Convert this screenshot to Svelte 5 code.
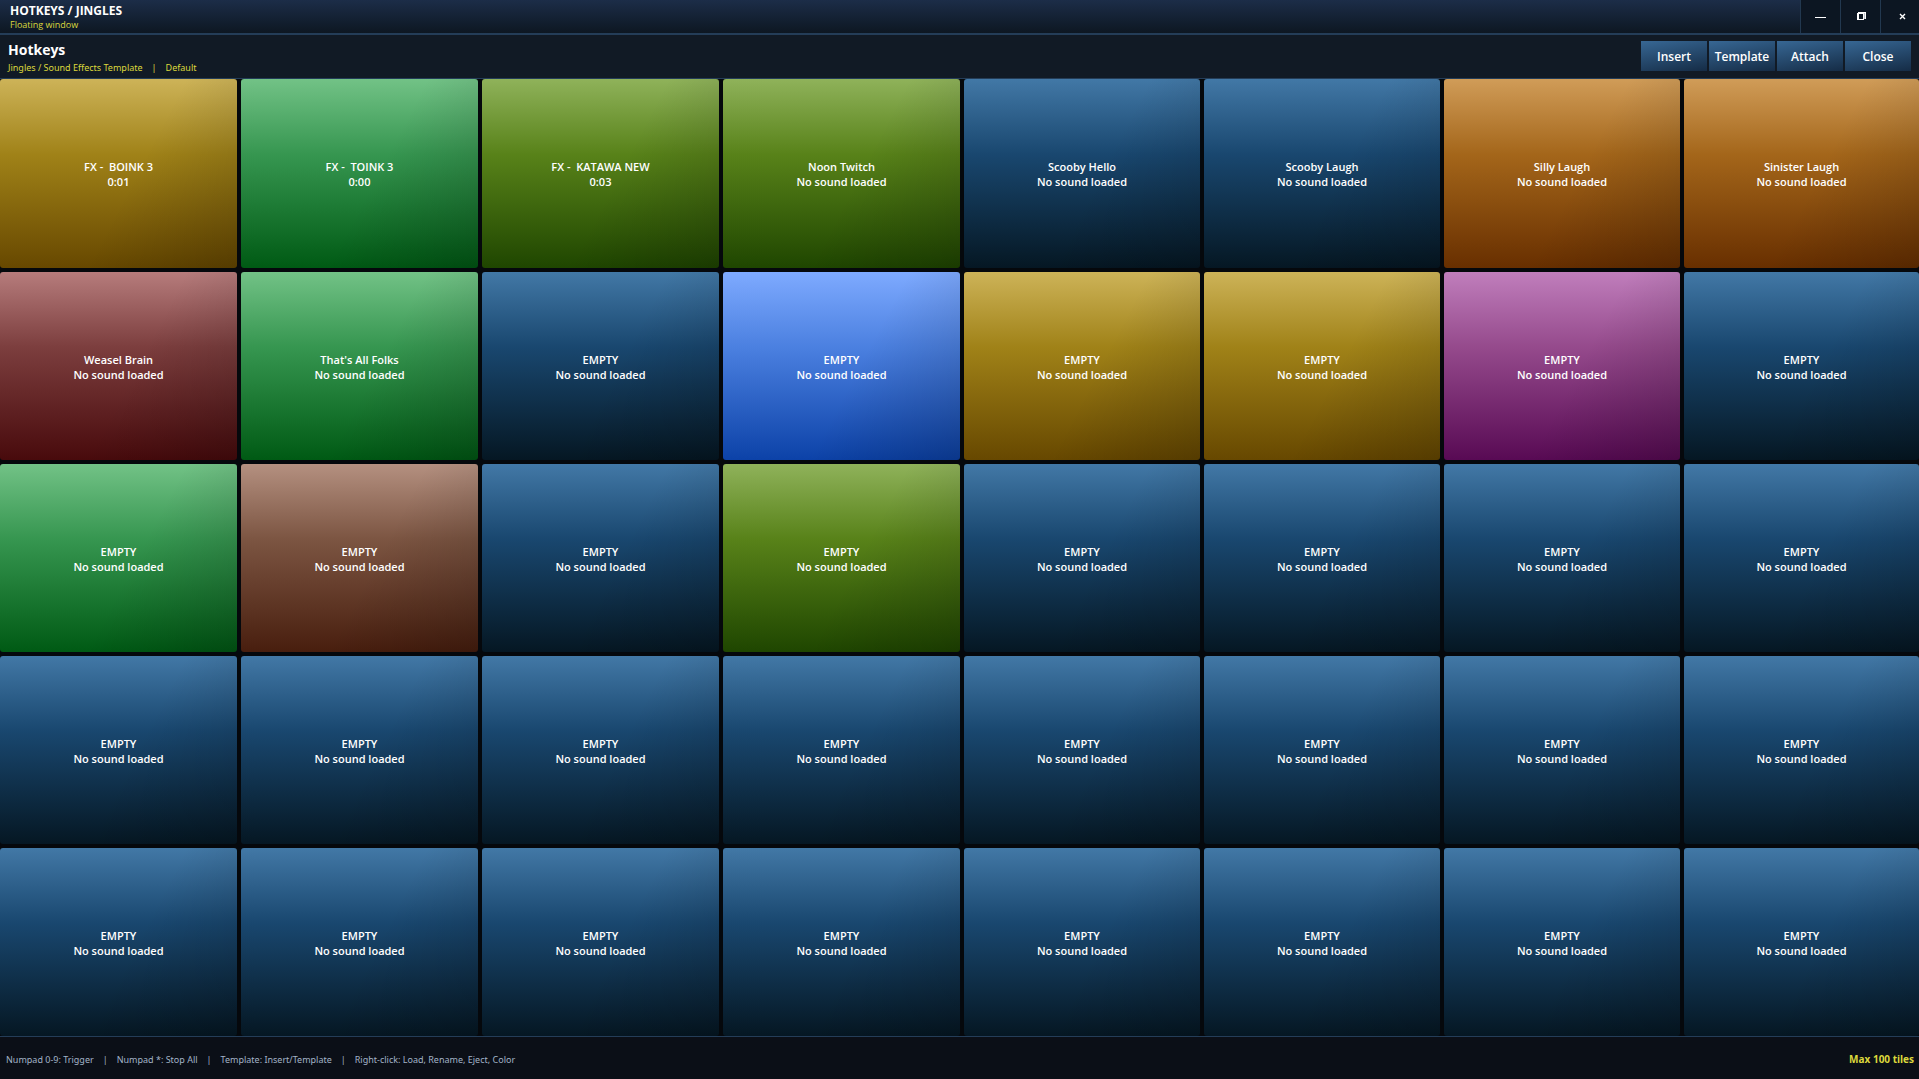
<script>
	const palette = {
		blue: ['#4278a6', '#19476f', '#051723'],
		gold: ['#cdb358', '#a08218', '#674800'],
		green: ['#72c286', '#369650', '#005a14'],
		olive: ['#8fb25a', '#588219', '#1f4600'],
		orange: ['#d09c58', '#a4661a', '#682f00'],
		maroon: ['#b67c7c', '#7c3e3e', '#480a0c'],
		royal: ['#7eaaff', '#4b80e0', '#0c42a8'],
		purple: ['#c07ebc', '#954a8c', '#580a54'],
		brown: ['#b49080', '#7c5542', '#481e0e']
	};

	const named = [
		['FX -  BOINK 3', '0:01', 'gold'],
		['FX -  TOINK 3', '0:00', 'green'],
		['FX -  KATAWA NEW', '0:03', 'olive'],
		['Noon Twitch', '', 'olive'],
		['Scooby Hello', '', 'blue'],
		['Scooby Laugh', '', 'blue'],
		['Silly Laugh', '', 'orange'],
		['Sinister Laugh', '', 'orange'],
		['Weasel Brain', '', 'maroon'],
		["That's All Folks", '', 'green']
	];

	// colours of the empty tiles that were customised, by position
	const colors = {
		11: 'royal',
		12: 'gold',
		13: 'gold',
		14: 'purple',
		16: 'green',
		17: 'brown',
		19: 'olive'
	};

	const tiles = Array.from({ length: 40 }, (_, i) => {
		const [name, time, color] = named[i] ?? ['EMPTY', '', colors[i] ?? 'blue'];
		const [top, mid, low] = palette[color];
		return { name, time: time || 'No sound loaded', top, mid, low };
	});

	const actions = ['Insert', 'Template', 'Attach', 'Close'];
	const hints = [
		'Numpad 0-9: Trigger',
		'Numpad *: Stop All',
		'Template: Insert/Template',
		'Right-click: Load, Rename, Eject, Color'
	];
</script>

<div class="window">
	<div class="titlebar">
		<div class="caption">
			<strong>HOTKEYS / JINGLES</strong>
			<small>Floating window</small>
		</div>
		<div class="controls">
			<button aria-label="Minimize">
				<svg width="13" height="12" viewBox="0 0 13 12"><path d="M1 6.5h11" stroke="#fff" /></svg>
			</button>
			<button aria-label="Restore">
				<svg width="13" height="12" viewBox="0 0 13 12">
					<path
						d="M4 1h8v7h-2v1H3V2h1zM5 3v5h4V3z"
						fill="#fff"
						fill-rule="evenodd"
					/>
					<path d="M10.5 2v6" stroke="#8d99a6" stroke-width="0.6" />
				</svg>
			</button>
			<button aria-label="Close window">
				<svg width="13" height="12" viewBox="0 0 13 12">
					<path d="M6 3l5 5M11 3l-5 5" stroke="#fff" stroke-width="1.4" />
				</svg>
			</button>
		</div>
	</div>

	<header>
		<div>
			<h1>Hotkeys</h1>
			<p><span>Jingles / Sound Effects Template</span><i>|</i><span>Default</span></p>
		</div>
		<nav>
			{#each actions as action}
				<button>{action}</button>
			{/each}
		</nav>
	</header>

	<main>
		{#each tiles as tile}
			<button class="tile" style="--top: {tile.top}; --mid: {tile.mid}; --low: {tile.low}">
				<span>{tile.name}</span>
				<span>{tile.time}</span>
			</button>
		{/each}
	</main>

	<footer>
		<p>
			{#each hints as hint, i}
				{#if i > 0}<i>|</i>{/if}<span>{hint}</span>
			{/each}
		</p>
		<strong>Max 100 tiles</strong>
	</footer>
</div>

<style>
	:global(body) {
		margin: 0;
		background: #05080c;
	}

	.window {
		display: flex;
		flex-direction: column;
		min-height: 100vh;
		font-family: 'Open Sans', 'Noto Sans', sans-serif;
		color: #fff;
		background: #05080c;
	}

	button {
		padding: 0;
		border: 0;
		font-family: inherit;
		color: inherit;
	}

	p,
	h1 {
		margin: 0;
	}

	i {
		font-style: normal;
	}

	.titlebar {
		display: flex;
		justify-content: space-between;
		height: 33px;
		border-bottom: 2px solid #243d58;
		background: linear-gradient(#1c2d48, #0d1722);
	}

	.caption {
		display: flex;
		flex-direction: column;
		padding: 2px 10px;
	}

	.caption strong {
		font-size: 12px;
		line-height: 17px;
	}

	.caption small {
		font-size: 9px;
		line-height: 12px;
		color: #dcd83c;
	}

	.controls {
		display: flex;
	}

	.controls button {
		display: flex;
		align-items: center;
		justify-content: center;
		width: 40px;
		border-left: 1px solid #22384f;
		background: #0c1622;
	}

	.controls button:last-child {
		width: 39px;
	}

	header {
		display: flex;
		justify-content: space-between;
		align-items: flex-start;
		height: 37px;
		padding: 6px 8px 0;
		border-bottom: 1px solid #243d58;
		background: #111a25;
	}

	h1 {
		font-size: 14px;
		line-height: 18px;
	}

	header p {
		display: flex;
		gap: 9px;
		font-family: 'Noto Sans', sans-serif;
		font-size: 9px;
		line-height: 18px;
		color: #dcd83c;
	}

	nav {
		display: flex;
		gap: 2px;
	}

	nav button {
		width: 66px;
		height: 30px;
		font-size: 12px;
		font-weight: 600;
		background: linear-gradient(170deg, #376794, #152c46);
	}

	main {
		flex: 1;
		display: grid;
		grid-template-columns: repeat(4, 237fr) repeat(3, 236fr) 235fr;
		grid-template-rows: 189fr repeat(4, 188fr);
		gap: 4px;
	}

	.tile {
		display: flex;
		flex-direction: column;
		align-items: center;
		justify-content: center;
		padding-top: 1px;
		border-radius: 3px;
		font-size: 11px;
		font-weight: 600;
		line-height: 15px;
		white-space: pre;
		background:
			linear-gradient(118deg, transparent 55%, rgba(0, 0, 0, 0.18)),
			linear-gradient(var(--top), var(--mid) 40%, var(--low));
	}

	footer {
		display: flex;
		justify-content: space-between;
		align-items: center;
		height: 40px;
		padding: 2px 5px 0 6px;
		border-top: 1px solid #243d58;
		font-family: 'Noto Sans', sans-serif;
		font-size: 9px;
		background: #0b0f17;
	}

	footer p {
		display: flex;
		gap: 9px;
		color: #a3b4c8;
	}

	footer strong {
		font-family: 'Open Sans', sans-serif;
		font-size: 10px;
		color: #dcd83c;
	}
</style>
